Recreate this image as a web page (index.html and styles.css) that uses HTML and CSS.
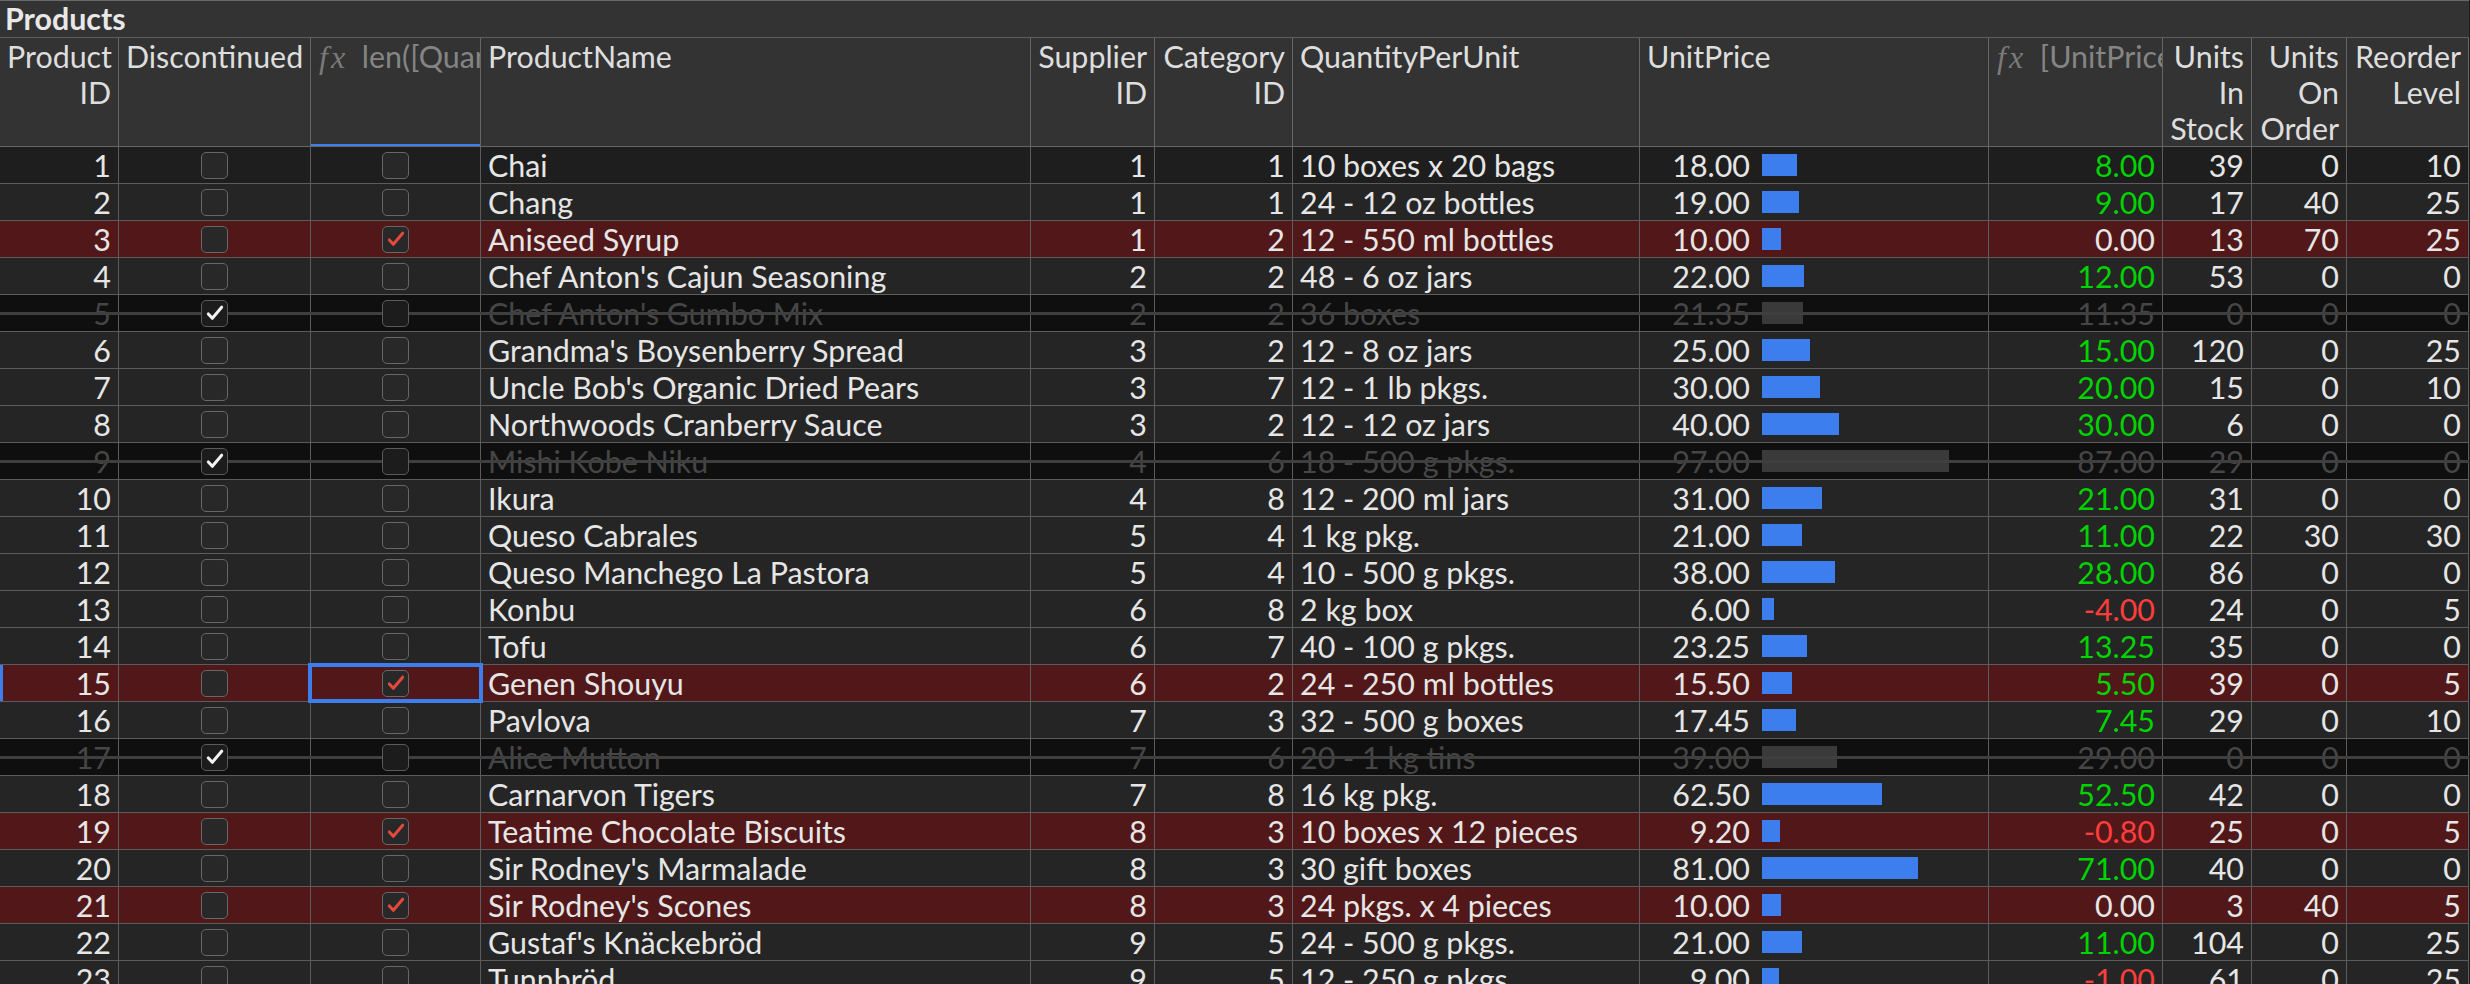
FILE: index.html
```html
<!DOCTYPE html>
<html>
<head>
<meta charset="utf-8">
<title>Products</title>
<link rel="stylesheet" href="styles.css">
</head>
<body>
<div class="grid">
  <div class="title">Products</div>
  <div class="row head">
    <div class="c num">Product<br>ID</div>
    <div class="c">Discontinued</div>
    <div class="c fxh fxline"><span class="fx">fx</span> len([QuantityPerUnit]) &gt;= 19</div>
    <div class="c">ProductName</div>
    <div class="c num">Supplier<br>ID</div>
    <div class="c num">Category<br>ID</div>
    <div class="c">QuantityPerUnit</div>
    <div class="c">UnitPrice</div>
    <div class="c fxh"><span class="fx">fx</span> [UnitPrice] - 10</div>
    <div class="c num">Units<br>In<br>Stock</div>
    <div class="c num">Units<br>On<br>Order</div>
    <div class="c num">Reorder<br>Level</div>
  </div>

  <div class="row first">
    <div class="c num">1</div>
    <div class="c chk"><span class="cb"></span></div>
    <div class="c chk"><span class="cb"></span></div>
    <div class="c">Chai</div>
    <div class="c num">1</div>
    <div class="c num">1</div>
    <div class="c">10 boxes x 20 bags</div>
    <div class="c price"><span class="v">18.00</span><span class="bar" style="width:35px"></span></div>
    <div class="c num pos">8.00</div>
    <div class="c num">39</div>
    <div class="c num">0</div>
    <div class="c num">10</div>
  </div>

  <div class="row">
    <div class="c num">2</div>
    <div class="c chk"><span class="cb"></span></div>
    <div class="c chk"><span class="cb"></span></div>
    <div class="c">Chang</div>
    <div class="c num">1</div>
    <div class="c num">1</div>
    <div class="c">24 - 12 oz bottles</div>
    <div class="c price"><span class="v">19.00</span><span class="bar" style="width:37px"></span></div>
    <div class="c num pos">9.00</div>
    <div class="c num">17</div>
    <div class="c num">40</div>
    <div class="c num">25</div>
  </div>

  <div class="row hl">
    <div class="c num">3</div>
    <div class="c chk"><span class="cb"></span></div>
    <div class="c chk"><span class="cb red"><svg viewBox="0 0 27 27"><path d="M6 14.5 L10.5 19.5 L21 7"/></svg></span></div>
    <div class="c">Aniseed Syrup</div>
    <div class="c num">1</div>
    <div class="c num">2</div>
    <div class="c">12 - 550 ml bottles</div>
    <div class="c price"><span class="v">10.00</span><span class="bar" style="width:19px"></span></div>
    <div class="c num">0.00</div>
    <div class="c num">13</div>
    <div class="c num">70</div>
    <div class="c num">25</div>
  </div>

  <div class="row">
    <div class="c num">4</div>
    <div class="c chk"><span class="cb"></span></div>
    <div class="c chk"><span class="cb"></span></div>
    <div class="c">Chef Anton's Cajun Seasoning</div>
    <div class="c num">2</div>
    <div class="c num">2</div>
    <div class="c">48 - 6 oz jars</div>
    <div class="c price"><span class="v">22.00</span><span class="bar" style="width:42px"></span></div>
    <div class="c num pos">12.00</div>
    <div class="c num">53</div>
    <div class="c num">0</div>
    <div class="c num">0</div>
  </div>

  <div class="row disc">
    <div class="c num">5</div>
    <div class="c chk"><span class="cb white"><svg viewBox="0 0 27 27"><path d="M6 14.5 L10.5 19.5 L21 7"/></svg></span></div>
    <div class="c chk"><span class="cb"></span></div>
    <div class="c">Chef Anton's Gumbo Mix</div>
    <div class="c num">2</div>
    <div class="c num">2</div>
    <div class="c">36 boxes</div>
    <div class="c price"><span class="v">21.35</span><span class="bar" style="width:41px"></span></div>
    <div class="c num">11.35</div>
    <div class="c num">0</div>
    <div class="c num">0</div>
    <div class="c num">0</div>
  </div>

  <div class="row">
    <div class="c num">6</div>
    <div class="c chk"><span class="cb"></span></div>
    <div class="c chk"><span class="cb"></span></div>
    <div class="c">Grandma's Boysenberry Spread</div>
    <div class="c num">3</div>
    <div class="c num">2</div>
    <div class="c">12 - 8 oz jars</div>
    <div class="c price"><span class="v">25.00</span><span class="bar" style="width:48px"></span></div>
    <div class="c num pos">15.00</div>
    <div class="c num">120</div>
    <div class="c num">0</div>
    <div class="c num">25</div>
  </div>

  <div class="row">
    <div class="c num">7</div>
    <div class="c chk"><span class="cb"></span></div>
    <div class="c chk"><span class="cb"></span></div>
    <div class="c">Uncle Bob's Organic Dried Pears</div>
    <div class="c num">3</div>
    <div class="c num">7</div>
    <div class="c">12 - 1 lb pkgs.</div>
    <div class="c price"><span class="v">30.00</span><span class="bar" style="width:58px"></span></div>
    <div class="c num pos">20.00</div>
    <div class="c num">15</div>
    <div class="c num">0</div>
    <div class="c num">10</div>
  </div>

  <div class="row">
    <div class="c num">8</div>
    <div class="c chk"><span class="cb"></span></div>
    <div class="c chk"><span class="cb"></span></div>
    <div class="c">Northwoods Cranberry Sauce</div>
    <div class="c num">3</div>
    <div class="c num">2</div>
    <div class="c">12 - 12 oz jars</div>
    <div class="c price"><span class="v">40.00</span><span class="bar" style="width:77px"></span></div>
    <div class="c num pos">30.00</div>
    <div class="c num">6</div>
    <div class="c num">0</div>
    <div class="c num">0</div>
  </div>

  <div class="row disc">
    <div class="c num">9</div>
    <div class="c chk"><span class="cb white"><svg viewBox="0 0 27 27"><path d="M6 14.5 L10.5 19.5 L21 7"/></svg></span></div>
    <div class="c chk"><span class="cb"></span></div>
    <div class="c">Mishi Kobe Niku</div>
    <div class="c num">4</div>
    <div class="c num">6</div>
    <div class="c">18 - 500 g pkgs.</div>
    <div class="c price"><span class="v">97.00</span><span class="bar" style="width:187px"></span></div>
    <div class="c num">87.00</div>
    <div class="c num">29</div>
    <div class="c num">0</div>
    <div class="c num">0</div>
  </div>

  <div class="row">
    <div class="c num">10</div>
    <div class="c chk"><span class="cb"></span></div>
    <div class="c chk"><span class="cb"></span></div>
    <div class="c">Ikura</div>
    <div class="c num">4</div>
    <div class="c num">8</div>
    <div class="c">12 - 200 ml jars</div>
    <div class="c price"><span class="v">31.00</span><span class="bar" style="width:60px"></span></div>
    <div class="c num pos">21.00</div>
    <div class="c num">31</div>
    <div class="c num">0</div>
    <div class="c num">0</div>
  </div>

  <div class="row">
    <div class="c num">11</div>
    <div class="c chk"><span class="cb"></span></div>
    <div class="c chk"><span class="cb"></span></div>
    <div class="c">Queso Cabrales</div>
    <div class="c num">5</div>
    <div class="c num">4</div>
    <div class="c">1 kg pkg.</div>
    <div class="c price"><span class="v">21.00</span><span class="bar" style="width:40px"></span></div>
    <div class="c num pos">11.00</div>
    <div class="c num">22</div>
    <div class="c num">30</div>
    <div class="c num">30</div>
  </div>

  <div class="row">
    <div class="c num">12</div>
    <div class="c chk"><span class="cb"></span></div>
    <div class="c chk"><span class="cb"></span></div>
    <div class="c">Queso Manchego La Pastora</div>
    <div class="c num">5</div>
    <div class="c num">4</div>
    <div class="c">10 - 500 g pkgs.</div>
    <div class="c price"><span class="v">38.00</span><span class="bar" style="width:73px"></span></div>
    <div class="c num pos">28.00</div>
    <div class="c num">86</div>
    <div class="c num">0</div>
    <div class="c num">0</div>
  </div>

  <div class="row">
    <div class="c num">13</div>
    <div class="c chk"><span class="cb"></span></div>
    <div class="c chk"><span class="cb"></span></div>
    <div class="c">Konbu</div>
    <div class="c num">6</div>
    <div class="c num">8</div>
    <div class="c">2 kg box</div>
    <div class="c price"><span class="v">6.00</span><span class="bar" style="width:12px"></span></div>
    <div class="c num neg">-4.00</div>
    <div class="c num">24</div>
    <div class="c num">0</div>
    <div class="c num">5</div>
  </div>

  <div class="row">
    <div class="c num">14</div>
    <div class="c chk"><span class="cb"></span></div>
    <div class="c chk"><span class="cb"></span></div>
    <div class="c">Tofu</div>
    <div class="c num">6</div>
    <div class="c num">7</div>
    <div class="c">40 - 100 g pkgs.</div>
    <div class="c price"><span class="v">23.25</span><span class="bar" style="width:45px"></span></div>
    <div class="c num pos">13.25</div>
    <div class="c num">35</div>
    <div class="c num">0</div>
    <div class="c num">0</div>
  </div>

  <div class="row hl cur">
    <div class="c num">15</div>
    <div class="c chk"><span class="cb"></span></div>
    <div class="c chk sel"><span class="cb red"><svg viewBox="0 0 27 27"><path d="M6 14.5 L10.5 19.5 L21 7"/></svg></span></div>
    <div class="c">Genen Shouyu</div>
    <div class="c num">6</div>
    <div class="c num">2</div>
    <div class="c">24 - 250 ml bottles</div>
    <div class="c price"><span class="v">15.50</span><span class="bar" style="width:30px"></span></div>
    <div class="c num pos">5.50</div>
    <div class="c num">39</div>
    <div class="c num">0</div>
    <div class="c num">5</div>
  </div>

  <div class="row">
    <div class="c num">16</div>
    <div class="c chk"><span class="cb"></span></div>
    <div class="c chk"><span class="cb"></span></div>
    <div class="c">Pavlova</div>
    <div class="c num">7</div>
    <div class="c num">3</div>
    <div class="c">32 - 500 g boxes</div>
    <div class="c price"><span class="v">17.45</span><span class="bar" style="width:34px"></span></div>
    <div class="c num pos">7.45</div>
    <div class="c num">29</div>
    <div class="c num">0</div>
    <div class="c num">10</div>
  </div>

  <div class="row disc">
    <div class="c num">17</div>
    <div class="c chk"><span class="cb white"><svg viewBox="0 0 27 27"><path d="M6 14.5 L10.5 19.5 L21 7"/></svg></span></div>
    <div class="c chk"><span class="cb"></span></div>
    <div class="c">Alice Mutton</div>
    <div class="c num">7</div>
    <div class="c num">6</div>
    <div class="c">20 - 1 kg tins</div>
    <div class="c price"><span class="v">39.00</span><span class="bar" style="width:75px"></span></div>
    <div class="c num">29.00</div>
    <div class="c num">0</div>
    <div class="c num">0</div>
    <div class="c num">0</div>
  </div>

  <div class="row">
    <div class="c num">18</div>
    <div class="c chk"><span class="cb"></span></div>
    <div class="c chk"><span class="cb"></span></div>
    <div class="c">Carnarvon Tigers</div>
    <div class="c num">7</div>
    <div class="c num">8</div>
    <div class="c">16 kg pkg.</div>
    <div class="c price"><span class="v">62.50</span><span class="bar" style="width:120px"></span></div>
    <div class="c num pos">52.50</div>
    <div class="c num">42</div>
    <div class="c num">0</div>
    <div class="c num">0</div>
  </div>

  <div class="row hl">
    <div class="c num">19</div>
    <div class="c chk"><span class="cb"></span></div>
    <div class="c chk"><span class="cb red"><svg viewBox="0 0 27 27"><path d="M6 14.5 L10.5 19.5 L21 7"/></svg></span></div>
    <div class="c">Teatime Chocolate Biscuits</div>
    <div class="c num">8</div>
    <div class="c num">3</div>
    <div class="c">10 boxes x 12 pieces</div>
    <div class="c price"><span class="v">9.20</span><span class="bar" style="width:18px"></span></div>
    <div class="c num neg">-0.80</div>
    <div class="c num">25</div>
    <div class="c num">0</div>
    <div class="c num">5</div>
  </div>

  <div class="row">
    <div class="c num">20</div>
    <div class="c chk"><span class="cb"></span></div>
    <div class="c chk"><span class="cb"></span></div>
    <div class="c">Sir Rodney's Marmalade</div>
    <div class="c num">8</div>
    <div class="c num">3</div>
    <div class="c">30 gift boxes</div>
    <div class="c price"><span class="v">81.00</span><span class="bar" style="width:156px"></span></div>
    <div class="c num pos">71.00</div>
    <div class="c num">40</div>
    <div class="c num">0</div>
    <div class="c num">0</div>
  </div>

  <div class="row hl">
    <div class="c num">21</div>
    <div class="c chk"><span class="cb"></span></div>
    <div class="c chk"><span class="cb red"><svg viewBox="0 0 27 27"><path d="M6 14.5 L10.5 19.5 L21 7"/></svg></span></div>
    <div class="c">Sir Rodney's Scones</div>
    <div class="c num">8</div>
    <div class="c num">3</div>
    <div class="c">24 pkgs. x 4 pieces</div>
    <div class="c price"><span class="v">10.00</span><span class="bar" style="width:19px"></span></div>
    <div class="c num">0.00</div>
    <div class="c num">3</div>
    <div class="c num">40</div>
    <div class="c num">5</div>
  </div>

  <div class="row">
    <div class="c num">22</div>
    <div class="c chk"><span class="cb"></span></div>
    <div class="c chk"><span class="cb"></span></div>
    <div class="c">Gustaf's Knäckebröd</div>
    <div class="c num">9</div>
    <div class="c num">5</div>
    <div class="c">24 - 500 g pkgs.</div>
    <div class="c price"><span class="v">21.00</span><span class="bar" style="width:40px"></span></div>
    <div class="c num pos">11.00</div>
    <div class="c num">104</div>
    <div class="c num">0</div>
    <div class="c num">25</div>
  </div>

  <div class="row">
    <div class="c num">23</div>
    <div class="c chk"><span class="cb"></span></div>
    <div class="c chk"><span class="cb"></span></div>
    <div class="c">Tunnbröd</div>
    <div class="c num">9</div>
    <div class="c num">5</div>
    <div class="c">12 - 250 g pkgs.</div>
    <div class="c price"><span class="v">9.00</span><span class="bar" style="width:17px"></span></div>
    <div class="c num neg">-1.00</div>
    <div class="c num">61</div>
    <div class="c num">0</div>
    <div class="c num">25</div>
  </div>
</div>
</body>
</html>
```

FILE: styles.css
```css
* {
  box-sizing: border-box;
}

html,
body {
  margin: 0;
  padding: 0;
  height: 984px;
  overflow: hidden;
  background: #1e1e1e;
}

body {
  font-family: Lato, "Open Sans", "DejaVu Sans", sans-serif;
  font-size: 30.4px;
  color: #e6e6e6;
}

.grid {
  width: 2469px;
}

.title {
  height: 38px;
  background: #333333;
  border-top: 1px solid #6a6a6a;
  border-bottom: 1px solid #5e5e5e;
  padding-left: 5px;
  font-weight: 700;
  line-height: 35px;
  color: #e8e8e8;
}

.row {
  display: grid;
  grid-template-columns: 119px 192px 170px 550px 124px 138px 347px 349px 174px 89px 95px 122px;
  position: relative;
  height: 37px;
  background: #252525;
}

.c {
  border-right: 1px solid #5c5c5c;
  border-bottom: 1px solid #5c5c5c;
  padding: 0 7px;
  line-height: 36px;
  white-space: nowrap;
  overflow: hidden;
}

.num {
  text-align: right;
}

.head {
  height: 109px;
  background: #333333;
  color: #dedede;
}

.head .c {
  border-color: #666666;
}

.fxh {
  color: #858585;
  padding-left: 8px;
}

.fx {
  font-family: "Liberation Serif", "DejaVu Serif", serif;
  font-style: italic;
  font-size: 32px;
  letter-spacing: 3px;
  color: #7a7a7a;
  margin-right: 6px;
}

.fxline {
  position: relative;
}

.fxline::after {
  content: "";
  position: absolute;
  left: 0;
  right: 0;
  bottom: -1px;
  height: 3px;
  background: #3d7eef;
}

.first {
  background: #1e1e1e;
}

.hl {
  background: #521819;
}

.disc {
  background: #0f0f0f;
  color: #464646;
}

.disc::after {
  content: "";
  position: absolute;
  left: 0;
  right: 0;
  top: 17px;
  height: 3px;
  background: #3f3f3f;
  z-index: 1;
}

.cur::before {
  content: "";
  position: absolute;
  left: 0;
  top: 0;
  bottom: 1px;
  width: 3px;
  background: #3d7eef;
  z-index: 3;
}

.chk {
  display: flex;
  align-items: center;
  justify-content: center;
  padding: 0;
  overflow: visible;
}

.cb {
  position: relative;
  z-index: 2;
  width: 27px;
  height: 27px;
  border: 1.5px solid #676767;
  border-radius: 5px;
  background: #282828;
  display: flex;
  align-items: center;
  justify-content: center;
}

.disc .cb {
  background: #1c1c1c;
  border-color: #5a5a5a;
}

.cb svg {
  width: 24px;
  height: 24px;
  fill: none;
  stroke-width: 3.4;
  stroke-linecap: round;
  stroke-linejoin: round;
}

.cb.red svg {
  stroke: #e5493c;
}

.cb.white svg {
  stroke: #f2f2f2;
}

.sel {
  position: relative;
}

.sel::after {
  content: "";
  position: absolute;
  left: -3px;
  right: -3px;
  top: -2px;
  bottom: -2px;
  border: 4px solid #3d7eef;
  z-index: 3;
}

.price {
  display: flex;
  align-items: center;
  padding: 0;
}

.v {
  flex: none;
  width: 110px;
  text-align: right;
}

.bar {
  flex: none;
  height: 22px;
  margin-left: 12px;
  background: #3d7eef;
}

.disc .bar {
  background: #3a3a3a;
}

.pos {
  color: #00d300;
}

.neg {
  color: #ff3d3d;
}
```
